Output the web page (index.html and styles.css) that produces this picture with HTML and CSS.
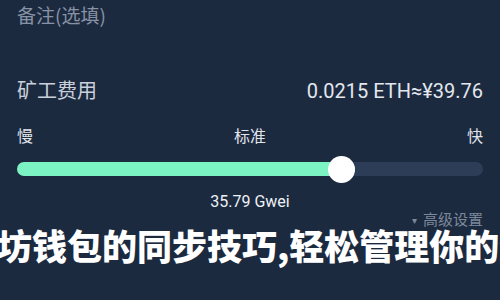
FILE: index.html
```html
<!DOCTYPE html>
<html lang="zh-CN">
<head>
<meta charset="utf-8">
<link rel="stylesheet" href="styles.css">
</head>
<body>
<div class="page">
  <div class="remark">备注(选填)</div>
  <div class="fee-row">
    <span class="fee-label">矿工费用</span>
    <span class="fee-value">0.0215 ETH≈¥39.76</span>
  </div>
  <div class="speed-labels">
    <span>慢</span><span>标准</span><span>快</span>
  </div>
  <div class="slider">
    <div class="fill" style="width:338px"></div>
    <div class="thumb"></div>
  </div>
  <div class="gwei">35.79 Gwei</div>
  <div class="advanced"><span class="caret">▾</span>高级设置</div>
  <div class="banner">坊钱包的同步技巧,轻松管理你的数</div>
</div>
</body>
</html>
```

FILE: styles.css
```css
html, body {
  margin: 0;
  padding: 0;
  background: #1c2a40;
  overflow: hidden;
}
body {
  width: 500px;
  height: 300px;
  font-family: "Noto Sans CJK SC", Roboto, sans-serif;
}
.page {
  padding: 0 17px;
}
.remark {
  font-size: 19px;
  line-height: 30px;
  color: #8792a4;
}
.fee-row {
  margin-top: 45px;
  height: 30px;
  display: flex;
  justify-content: space-between;
  align-items: baseline;
}
.fee-label {
  font-size: 20px;
  line-height: 30px;
  color: #c9d0db;
}
.fee-value {
  font-family: Roboto, "Noto Sans CJK SC", sans-serif;
  font-size: 20px;
  line-height: 30px;
  color: #e3e7ee;
}
.speed-labels {
  margin-top: 20px;
  height: 20px;
  display: flex;
  justify-content: space-between;
  font-size: 16px;
  line-height: 20px;
  color: #e0e4eb;
}
.slider {
  margin-top: 17px;
  height: 14px;
  border-radius: 7px;
  background: #2e3d57;
  display: flex;
  align-items: center;
}
.fill {
  height: 14px;
  border-radius: 7px;
  background: #7cf3c2;
  flex-shrink: 0;
}
.thumb {
  width: 27px;
  height: 27px;
  border-radius: 50%;
  background: #ffffff;
  margin-left: -27px;
  flex-shrink: 0;
}
.gwei {
  margin-top: 17px;
  text-align: center;
  font-family: Roboto, sans-serif;
  font-size: 16px;
  line-height: 18px;
  color: #eef1f5;
}
.advanced {
  text-align: right;
  font-size: 15px;
  line-height: 16px;
  color: #7d889a;
}
.caret {
  font-size: 10px;
  margin-right: 6px;
  vertical-align: 1px;
}
.banner {
  margin-left: -20px;
  white-space: nowrap;
  font-size: 35px;
  line-height: 34px;
  font-weight: 900;
  color: #ffffff;
}
```
